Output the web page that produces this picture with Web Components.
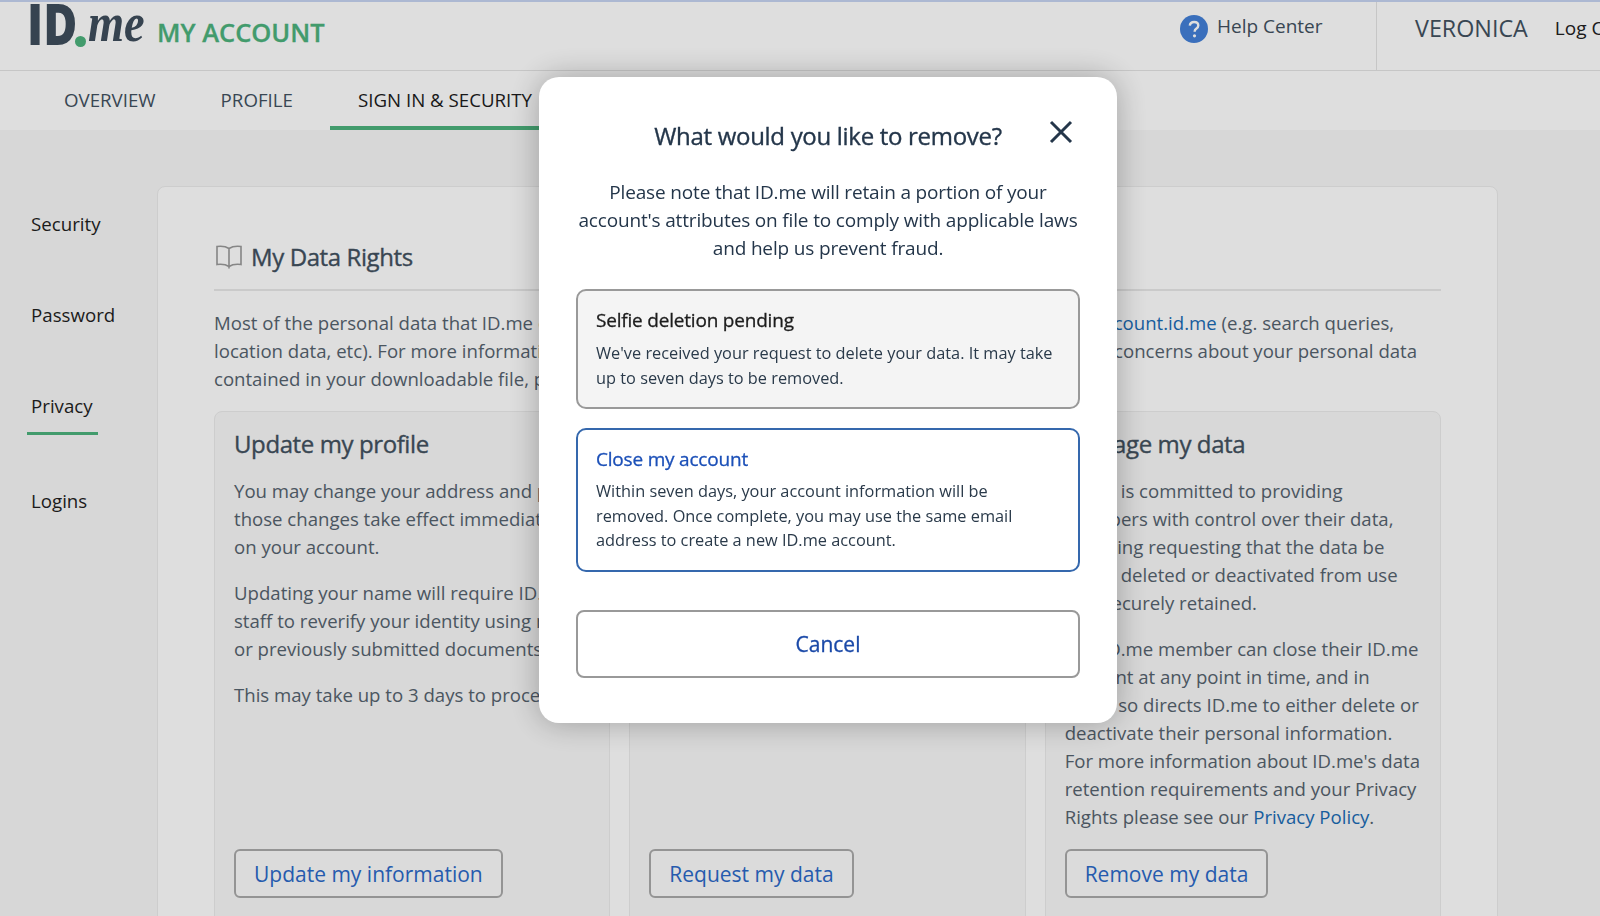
<!DOCTYPE html>
<html>
<head>
<meta charset="utf-8">
<title>ID.me My Account</title>
<style>
    html, body { margin: 0; height: 916px; overflow: hidden; }
    body { background: #f7f7f7; font-family: "Open Sans", sans-serif; color: #42515f; }
    a { color: #1a6bb5; text-decoration: none; }
</style>
</head>
<body>
<id-header></id-header>
<id-tabs>
    <id-tab>OVERVIEW</id-tab>
    <id-tab>PROFILE</id-tab>
    <id-tab active>SIGN IN &amp; SECURITY</id-tab>
</id-tabs>
<id-layout>
    <id-sidenav slot="side">
        <id-sidelink>Security</id-sidelink>
        <id-sidelink>Password</id-sidelink>
        <id-sidelink active>Privacy</id-sidelink>
        <id-sidelink>Logins</id-sidelink>
    </id-sidenav>
    <id-rights>
        <p>Most of the personal data that ID.me collects from you can be viewed and changed at once by visiting <a>account.id.me</a> (e.g. search queries,<br>location data, etc). For more information on what we hold or how it is used and by whom, or if you have concerns about your personal data<br>contained in your downloadable file, please contact our support team.</p>
        <id-card slot="cards" heading="Update my profile" action="Update my information">
            <p>You may change your address and phone,<br>those changes take effect immediately<br>on your account.</p>
            <p>Updating your name will require ID.me<br>staff to reverify your identity using new<br>or previously submitted documents.</p>
            <p>This may take up to 3 days to process.</p>
        </id-card>
        <id-card slot="cards" heading="Request a copy" action="Request my data">
            <p>You may request a copy of the personal<br>data that ID.me holds about you.</p>
        </id-card>
        <id-card slot="cards" heading="Manage my data" action="Remove my data">
            <p>ID.me is committed to providing<br>members with control over their data,<br>including requesting that the data be<br>either deleted or deactivated from use<br>and securely retained.</p>
            <p>Any ID.me member can close their ID.me<br>account at any point in time, and in<br>doing so directs ID.me to either delete or<br>deactivate their personal information.<br>For more information about ID.me's data<br>retention requirements and your Privacy<br>Rights please see our <a>Privacy Policy</a>.</p>
        </id-card>
    </id-rights>
</id-layout>
<id-backdrop></id-backdrop>
<id-modal heading="What would you like to remove?">
    <span slot="intro">Please note that ID.me will retain a portion of your<br>account's attributes on file to comply with applicable laws<br>and help us prevent fraud.</span>
    <id-option heading="Selfie deletion pending" pending>We've received your request to delete your data. It may take<br>up to seven days to be removed.</id-option>
    <id-option heading="Close my account">Within seven days, your account information will be<br>removed. Once complete, you may use the same email<br>address to create a new ID.me account.</id-option>
    <id-cancel slot="footer">Cancel</id-cancel>
</id-modal>

<script>
// small helper, every element just stamps its markup into an open shadow root
const define = (name, html, setup) => {
    const tpl = document.createElement('template');
    tpl.innerHTML = html;
    customElements.define(name, class extends HTMLElement {
        constructor() {
            super();
            this.attachShadow({ mode: 'open' });
            this.shadowRoot.appendChild(tpl.content.cloneNode(true));
        }
        connectedCallback() {
            if (setup) setup(this, this.shadowRoot);
        }
    });
};

define('id-header', `
<style>
    :host { display: flex; align-items: stretch; height: 68px; border-top: 2px solid #c6d4f2; border-bottom: 1px solid #e4e4e4; background: #fff; white-space: nowrap; }
    .logo { margin-left: 28px; width: 129px; color: #3e4d5c; position: relative; }
    .id { position: absolute; left: -1px; top: 1px; font: 800 56px/40px "Open Sans", sans-serif; transform: scaleX(.83); transform-origin: left; }
    .dot { position: absolute; left: 47px; top: 34px; width: 11px; height: 11px; border-radius: 50%; background: #4cb27c; }
    .me { position: absolute; left: 60px; top: 1px; font: italic 700 54px/40px "Liberation Serif", serif; transform: scaleX(.86); transform-origin: left; }
    .title { font-size: 26px; font-weight: 600; -webkit-text-stroke: .3px #4cb27c; color: #4cb27c; margin-top: 12px; line-height: 36px; transform: scaleX(.98); transform-origin: left; }
    .help { margin-left: auto; display: flex; align-items: flex-start; padding-top: 11px; width: 196px; box-sizing: border-box; color: #42515f; font-size: 19px; line-height: 26px; gap: 9px; }
    .help svg { flex: none; margin-top: 2px; }
    .user { border-left: 1px solid #e4e4e4; padding: 10px 0 0 38px; width: 224px; box-sizing: border-box; display: flex; gap: 27px; overflow: hidden; }
    .name { font-size: 23.300px; line-height: 33px; }
    .out { font-size: 19px; line-height: 33px; color: #222; }
</style>
<div class="logo"><span class="id">ID</span><span class="dot"></span><span class="me">me</span></div>
<div class="title">MY ACCOUNT</div>
<div class="help">
    <svg width="28" height="28" viewBox="0 0 28 28"><circle cx="14" cy="14" r="14" fill="#4380d8"/><path d="M9.800 10.600c.3-2.300 2-3.600 4.300-3.600 2.500 0 4.200 1.400 4.200 3.500 0 1.600-.9 2.500-2.100 3.300-1.100.7-1.500 1.200-1.500 2.400v.5" fill="none" stroke="#fff" stroke-width="2.400"/><circle cx="14.500" cy="20.800" r="1.600" fill="#fff"/></svg>
    <span>Help Center</span>
</div>
<div class="user"><span class="name">VERONICA</span><span class="out">Log Out</span></div>
`);

define('id-tabs', `
<style>
    :host { display: flex; gap: 9px; padding-left: 36px; height: 59px; background: #fff; }
</style>
<slot></slot>
`);

define('id-tab', `
<style>
    :host { display: block; box-sizing: border-box; height: 59px; padding: 16px 28px 0; font-size: 18.700px; line-height: 26px; color: #42515f; white-space: nowrap; }
    :host([active]) { color: #1c1c1c; border-bottom: 4px solid #4cb27c; }
</style>
<slot></slot>
`);

define('id-layout', `
<style>
    :host { display: flex; align-items: flex-start; padding: 56px 0 0 27px; }
    .side { width: 130px; flex: none; }
</style>
<div class="side"><slot name="side"></slot></div>
<slot></slot>
`);

define('id-sidenav', `
<style>
    :host { display: block; padding-top: 24px; }
</style>
<slot></slot>
`);

define('id-sidelink', `
<style>
    :host { display: block; width: max-content; height: 91px; box-sizing: border-box; padding: 0 4px; font-size: 18.700px; line-height: 28px; color: #1f1f1f; }
    :host([active]) span { padding-bottom: 12px; }
    :host([active]) { height: 95px; }
    :host([active])::after { content: ""; display: block; height: 3px; background: #4cb27c; margin: 0 -4px; width: 71px; }
    span { display: block; }
</style>
<span><slot></slot></span>
`);

define('id-rights', `
<style>
    :host { display: block; box-sizing: border-box; width: 1341px; min-height: 800px; padding: 48px 56px 0; background: #fff; border: 1px solid #ececec; border-radius: 8px; }
    .head { display: flex; align-items: center; gap: 9px; height: 44px; padding-bottom: 10px; border-bottom: 2px solid #e8e8e8; }
    .head svg { margin-left: 2px; }
    h2 { margin: 0; font-size: 24px; font-weight: 400; -webkit-text-stroke: .35px #42515f; letter-spacing: -.4px; color: #42515f; line-height: 44px; }
    .copy { font-size: 18.600px; line-height: 28px; padding-top: 18px; height: 120px; box-sizing: border-box; white-space: nowrap; color: #56636f; }
    ::slotted(p) { margin: 0; }
    .cards { display: grid; grid-template-columns: repeat(3, minmax(0, 1fr)); gap: 19px; }
</style>
<div class="head">
    <svg width="26" height="24" viewBox="0 0 26 24" fill="none" stroke="#9a9a9a" stroke-width="1.600"><path d="M13 3.500C10 1.500 5 1 1 1.500v18c4-.5 9 0 12 2 3-2 8-2.500 12-2v-18c-4-.5-9 0-12 2zM13 3.500v20"/></svg>
    <h2>My Data Rights</h2>
</div>
<div class="copy"><slot></slot></div>
<div class="cards"><slot name="cards"></slot></div>
`);

define('id-card', `
<style>
    :host { display: flex; flex-direction: column; box-sizing: border-box; height: 520px; padding: 14px 19px 13px; background: #f8f8f8; border: 1px solid #ececec; border-radius: 8px; color: #56636f; }
    h3 { margin: 0 0 15px; font-size: 24px; font-weight: 400; -webkit-text-stroke: .35px #42515f; letter-spacing: -.4px; line-height: 36px; color: #42515f; }
    .body { font-size: 18.600px; line-height: 28px; height: 372px; white-space: nowrap; }
    ::slotted(p) { margin: 0 0 18px; }
    button { align-self: flex-start; height: 49px; padding: 0 18px; background: #fcfcfc; border: 2px solid #aaa; border-radius: 6px; font: 21px "Open Sans", sans-serif; color: #2b69c8; }
</style>
<h3></h3>
<div class="body"><slot></slot></div>
<button></button>
`, (el, root) => {
    root.querySelector('h3').textContent = el.getAttribute('heading');
    root.querySelector('button').textContent = el.getAttribute('action');
});

define('id-backdrop', `
<style>
    :host { display: block; position: fixed; inset: 0; background: rgba(0, 0, 0, .13); }
</style>
`);

define('id-modal', `
<style>
    :host { display: block; position: fixed; left: 539px; top: 77px; width: 578px; height: 646px; box-sizing: border-box; padding: 0 37px; background: #fff; border-radius: 20px; box-shadow: 0 0 32px rgba(0, 0, 0, .28); color: #24364a; }
    h2 { margin: 0; padding-top: 39px; text-align: center; font-size: 24px; font-weight: 400; -webkit-text-stroke: .35px #24364a; letter-spacing: -.3px; line-height: 40px; }
    .close { position: absolute; left: 510px; top: 43px; }
    .intro { margin: 22px 0 27px; text-align: center; font-size: 19px; letter-spacing: -.16px; line-height: 28px; }
    .options { display: flex; flex-direction: column; gap: 19px; }
    .footer { margin-top: 38px; }
</style>
<h2></h2>
<svg class="close" width="24" height="24" viewBox="0 0 24 24" fill="none" stroke="#24364a" stroke-width="3"><path d="M2 2l20 20M22 2L2 22"/></svg>
<div class="intro"><slot name="intro"></slot></div>
<div class="options"><slot></slot></div>
<div class="footer"><slot name="footer"></slot></div>
`, (el, root) => {
    root.querySelector('h2').textContent = el.getAttribute('heading');
});

define('id-option', `
<style>
    :host { display: block; box-sizing: border-box; padding: 15px 18px 17px; border: 2px solid #3568ad; border-radius: 10px; background: #fff; --title: #1c50b8; --gap: 6px; }
    :host([pending]) { border-color: #999; background: #f4f4f4; --title: #1c1c1c; --gap: 7px; }
    h4 { margin: 0 0 var(--gap); font-size: 19px; font-weight: 400; -webkit-text-stroke: .3px var(--title); letter-spacing: -.2px; line-height: 28px; color: var(--title); }
    div { font-size: 16.330px; line-height: 24.500px; color: #2a3a4a; white-space: nowrap; }
</style>
<h4></h4>
<div><slot></slot></div>
`, (el, root) => {
    root.querySelector('h4').textContent = el.getAttribute('heading');
});

define('id-cancel', `
<style>
    :host { display: block; box-sizing: border-box; height: 68px; border: 2px solid #999; border-radius: 8px; text-align: center; font-size: 21px; -webkit-text-stroke: .3px #1a49a8; line-height: 64px; color: #1a49a8; }
</style>
<slot></slot>
`);
</script>
</body>
</html>
